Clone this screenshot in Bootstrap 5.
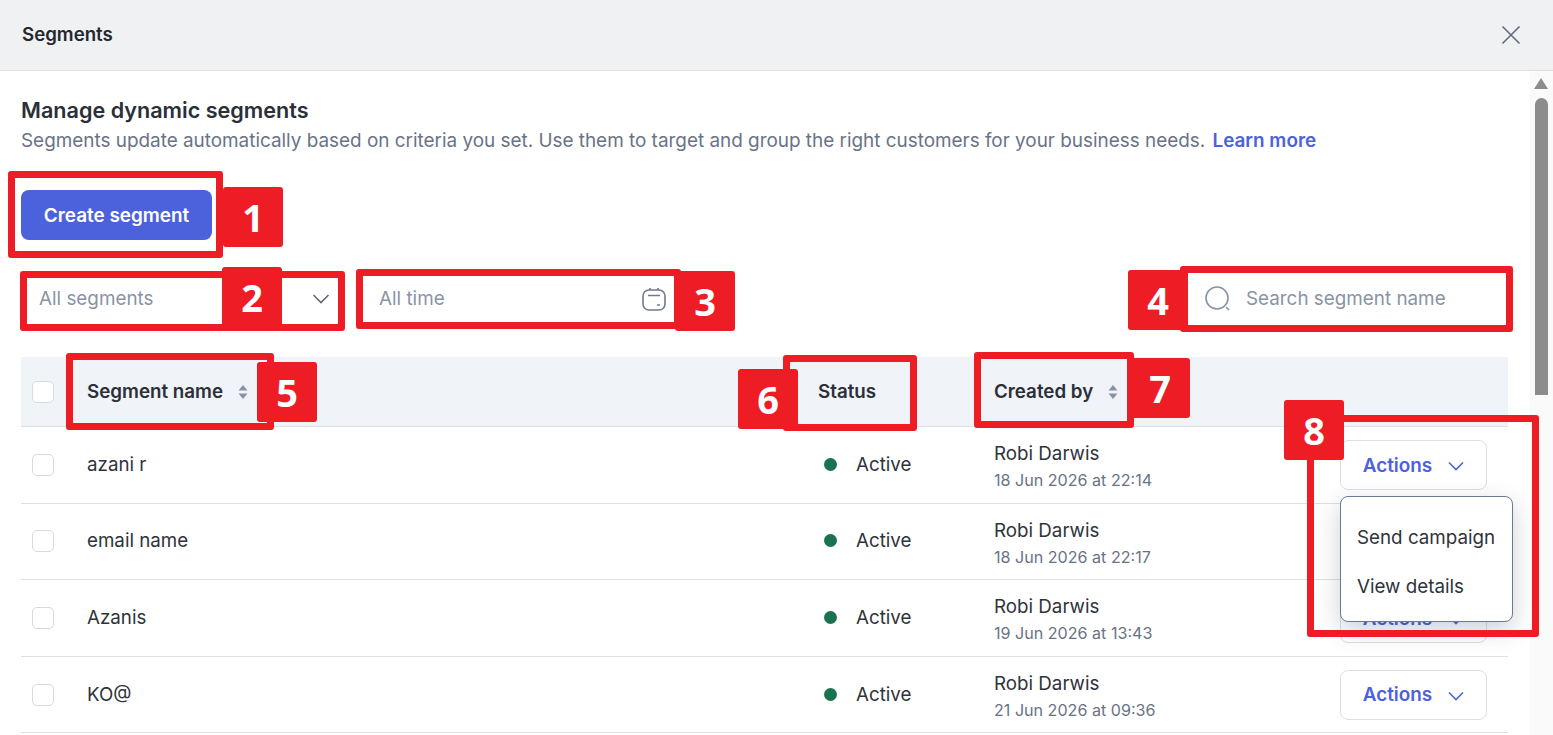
<!DOCTYPE html>
<html lang="en">
<head>
    <meta charset="UTF-8">
    <meta name="viewport" content="width=device-width, initial-scale=1.0">
    <title>Segments</title>
    <link href="https://cdn.jsdelivr.net/npm/bootstrap@5.3.1/dist/css/bootstrap.min.css" rel="stylesheet">
    <style>
        html, body { height: 100%; }
        body { font-family: Inter, "Liberation Sans", sans-serif; color: #2b2f38; background: #fff; overflow: hidden; position: relative; }
        .top-bar { height: 71px; background: #f0f1f3; border-bottom: 1px solid #dcdfe4; padding: 0 32px 0 22px; }
        .top-title { font-size: 18.67px; font-weight: 600; color: #23272f; }
        .page-body { padding: 27px 45px 0 21px; height: 664px; overflow: hidden; }
        .page-title { font-size: 21.6px; font-weight: 600; line-height: 24px; color: #2b2f38; }
        .page-sub { font-size: 18.9px; line-height: 24px; color: #697386; margin-top: 7px; }
        .learn { color: #4c62dc; font-weight: 600; text-decoration: none; margin-left: 2px; }
        .btn-create { width: 191px; height: 50px; margin-top: 37px; background: #4c62dc; color: #fff; font-size: 18.9px; font-weight: 600; border: 0; border-radius: 8px; padding: 2px 0 0; }
        .filter-row { margin-top: 34px; height: 50px; }
        .filter-box { height: 50px; background: #fff; font-size: 18.85px; color: #8a93a6; }
        .f-seg { width: 319px; padding: 0 10px 0 18px; }
        .f-time { width: 312px; margin-left: 16px; padding: 0 2px 0 23px; }
        .f-search { width: 317px; padding: 0 0 0 14px; gap: 15px; }
        .seg-table { table-layout: fixed; width: 1487px; margin: 33px 0 0; border-collapse: collapse; }
        .seg-table th { background: #f0f3f8; height: 69.5px; font-size: 18.75px; font-weight: 600; color: #2b2f38; border-bottom: 1px solid #dcdfe6; padding: 0; vertical-align: middle; }
        .seg-table td { height: 76.6px; font-size: 18.75px; font-weight: 400; color: #2f333c; border-bottom: 1px solid #dcdfe6; padding: 0; vertical-align: middle; }
        .seg-table th.c-name, .seg-table th.c-status, .seg-table th.c-by { padding-top: 2px; }
        .c-check { width: 44px; padding-left: 11px !important; }
        .c-name { width: 687px; padding-left: 22px !important; }
        .c-status { width: 176px; padding-left: 66px !important; }
        .c-status-td { padding-left: 72px !important; }
        .c-by { width: 412px; padding-left: 66px !important; }
        .tick { width: 22px; height: 22px; border: 1px solid #d6d9df; border-radius: 5px; background: #fff; display: block; }
        .sort-mark { margin-left: 15px; vertical-align: -2px; }
        .dot { width: 13px; height: 13px; border-radius: 50%; background: #19734f; display: inline-block; margin-right: 19px; }
        .by-block { padding-top: 3px; }
        .by-name { line-height: 24px; }
        .by-date { font-size: 16.1px; line-height: 20px; color: #697386; margin-top: 4px; }
        .btn-act { width: 147px; height: 50px; border: 1px solid #dcdfe6; border-radius: 8px; background: #fff; color: #4c62dc; font-size: 18.9px; font-weight: 600; padding: 2px 0 0; }
        .act-menu { position: absolute; left: 1340px; top: 496px; width: 173px; height: 126px; background: #fff; border: 1px solid #6b7a90; border-radius: 8px; box-shadow: 0 8px 24px rgba(30,40,60,.22); padding-top: 16px; z-index: 2; }
        .act-item { display: block; padding-left: 16px; height: 49px; line-height: 49px; font-size: 18.8px; color: #2f333c; white-space: nowrap; }
        .scroll-track { position: absolute; right: 0; top: 71px; bottom: 0; width: 23px; background: #fafafa; z-index: 1; }
        .scroll-up { position: absolute; left: 4px; top: 7px; width: 0; height: 0; border-left: 7px solid transparent; border-right: 7px solid transparent; border-bottom: 11px solid #8c8c8c; }
        .scroll-thumb { position: absolute; left: 5px; top: 27px; width: 13px; height: 297px; background: #8c8c8c; border-radius: 7px 7px 0 0; }
        .mark-box { position: absolute; border: 7px solid #ee1c25; border-radius: 3px; z-index: 3; }
        .mark-num { position: absolute; width: 60px; height: 60px; background: #ee1c25; color: #fff; border-radius: 3px; z-index: 4; font-family: "Open Sans", "Liberation Sans", sans-serif; font-size: 38px; font-weight: 700; line-height: 60px; text-align: center; }
    </style>
</head>
<body>
    <div class="top-bar d-flex align-items-center justify-content-between">
        <div class="top-title">Segments</div>
        <svg width="20" height="20" viewBox="0 0 20 20" fill="none" stroke="#5f6b7c" stroke-width="1.6"><path d="M1.5 1.5 18.5 18.5M18.5 1.5 1.5 18.5"/></svg>
    </div>

    <div class="page-body">
        <div class="page-title">Manage dynamic segments</div>
        <div class="page-sub">Segments update automatically based on criteria you set. Use them to target and group the right customers for your business needs. <a class="learn" href="#">Learn more</a></div>

        <button type="button" class="btn btn-create d-block">Create segment</button>

        <div class="filter-row d-flex align-items-center">
            <div class="filter-box f-seg d-flex align-items-center justify-content-between">
                <span>All segments</span>
                <svg width="18" height="10" viewBox="0 0 18 10" fill="none" stroke="#5f6b7c" stroke-width="1.6"><path d="M1.5 1 9 8.5 16.5 1"/></svg>
            </div>
            <div class="filter-box f-time d-flex align-items-center justify-content-between">
                <span>All time</span>
                <svg width="24" height="24" viewBox="0 0 24 24" fill="none" stroke="#6e7b90" stroke-width="1.6"><rect x="1" y="3" width="22" height="20" rx="6"/><path d="M6 8.5h12M8 1v2M16 1v2M15 18h3"/></svg>
            </div>
            <div class="filter-box f-search d-flex align-items-center ms-auto">
                <svg width="26" height="26" viewBox="0 0 26 26" fill="none" stroke="#8592a8" stroke-width="1.6"><circle cx="12" cy="12" r="11"/><path d="M21 21l3 3"/></svg>
                <span>Search segment name</span>
            </div>
        </div>

        <table class="seg-table">
            <thead>
                <tr>
                    <th class="c-check"><span class="tick"></span></th>
                    <th class="c-name">Segment name<svg class="sort-mark" width="10" height="16" viewBox="0 0 10 16" fill="#8a93a6"><path d="M5 1 9.5 6.5H.5zM5 15 .5 9.5h9z"/></svg></th>
                    <th class="c-status">Status</th>
                    <th class="c-by">Created by<svg class="sort-mark" width="10" height="16" viewBox="0 0 10 16" fill="#8a93a6"><path d="M5 1 9.5 6.5H.5zM5 15 .5 9.5h9z"/></svg></th>
                    <th></th>
                </tr>
            </thead>
            <tbody>
                <tr>
                    <td class="c-check"><span class="tick"></span></td>
                    <td class="c-name">azani r</td>
                    <td class="c-status-td"><span class="dot"></span>Active</td>
                    <td class="c-by"><div class="by-block"><div class="by-name">Robi Darwis</div><div class="by-date">18 Jun 2026 at 22:14</div></div></td>
                    <td><button type="button" class="btn btn-act">Actions<svg class="ms-3" width="16" height="10" viewBox="0 0 16 10" fill="none" stroke="#4c62dc" stroke-width="1.6"><path d="M1 1.5 8 8.5 15 1.5"/></svg></button></td>
                </tr>
                <tr>
                    <td class="c-check"><span class="tick"></span></td>
                    <td class="c-name">email name</td>
                    <td class="c-status-td"><span class="dot"></span>Active</td>
                    <td class="c-by"><div class="by-block"><div class="by-name">Robi Darwis</div><div class="by-date">18 Jun 2026 at 22:17</div></div></td>
                    <td></td>
                </tr>
                <tr>
                    <td class="c-check"><span class="tick"></span></td>
                    <td class="c-name">Azanis</td>
                    <td class="c-status-td"><span class="dot"></span>Active</td>
                    <td class="c-by"><div class="by-block"><div class="by-name">Robi Darwis</div><div class="by-date">19 Jun 2026 at 13:43</div></div></td>
                    <td><button type="button" class="btn btn-act">Actions<svg class="ms-3" width="16" height="10" viewBox="0 0 16 10" fill="none" stroke="#4c62dc" stroke-width="1.6"><path d="M1 1.5 8 8.5 15 1.5"/></svg></button></td>
                </tr>
                <tr>
                    <td class="c-check"><span class="tick"></span></td>
                    <td class="c-name">KO@</td>
                    <td class="c-status-td"><span class="dot"></span>Active</td>
                    <td class="c-by"><div class="by-block"><div class="by-name">Robi Darwis</div><div class="by-date">21 Jun 2026 at 09:36</div></div></td>
                    <td><button type="button" class="btn btn-act">Actions<svg class="ms-3" width="16" height="10" viewBox="0 0 16 10" fill="none" stroke="#4c62dc" stroke-width="1.6"><path d="M1 1.5 8 8.5 15 1.5"/></svg></button></td>
                </tr>
            </tbody>
        </table>
    </div>

    <div class="act-menu">
        <span class="act-item">Send campaign</span>
        <span class="act-item">View details</span>
    </div>

    <div class="scroll-track"><div class="scroll-up"></div><div class="scroll-thumb"></div></div>

    <div class="mark-box" style="left:8px;top:171px;width:215px;height:87px"></div>
    <div class="mark-num" style="left:223px;top:187px">1</div>
    <div class="mark-box" style="left:20px;top:271px;width:325px;height:60px"></div>
    <div class="mark-num" style="left:222px;top:267px">2</div>
    <div class="mark-box" style="left:356px;top:269px;width:325px;height:60px"></div>
    <div class="mark-num" style="left:675px;top:271px">3</div>
    <div class="mark-box" style="left:1180px;top:266px;width:333px;height:66px"></div>
    <div class="mark-num" style="left:1128px;top:270px">4</div>
    <div class="mark-box" style="left:66px;top:353px;width:208px;height:77px"></div>
    <div class="mark-num" style="left:257px;top:362px">5</div>
    <div class="mark-box" style="left:783px;top:355px;width:134px;height:76px"></div>
    <div class="mark-num" style="left:738px;top:369px">6</div>
    <div class="mark-box" style="left:974px;top:352px;width:160px;height:76px"></div>
    <div class="mark-num" style="left:1130px;top:358px">7</div>
    <div class="mark-box" style="left:1307px;top:415px;width:232px;height:222px"></div>
    <div class="mark-num" style="left:1284px;top:400px">8</div>

    <script src="https://cdn.jsdelivr.net/npm/bootstrap@5.3.1/dist/js/bootstrap.bundle.min.js"></script>
</body>
</html>
